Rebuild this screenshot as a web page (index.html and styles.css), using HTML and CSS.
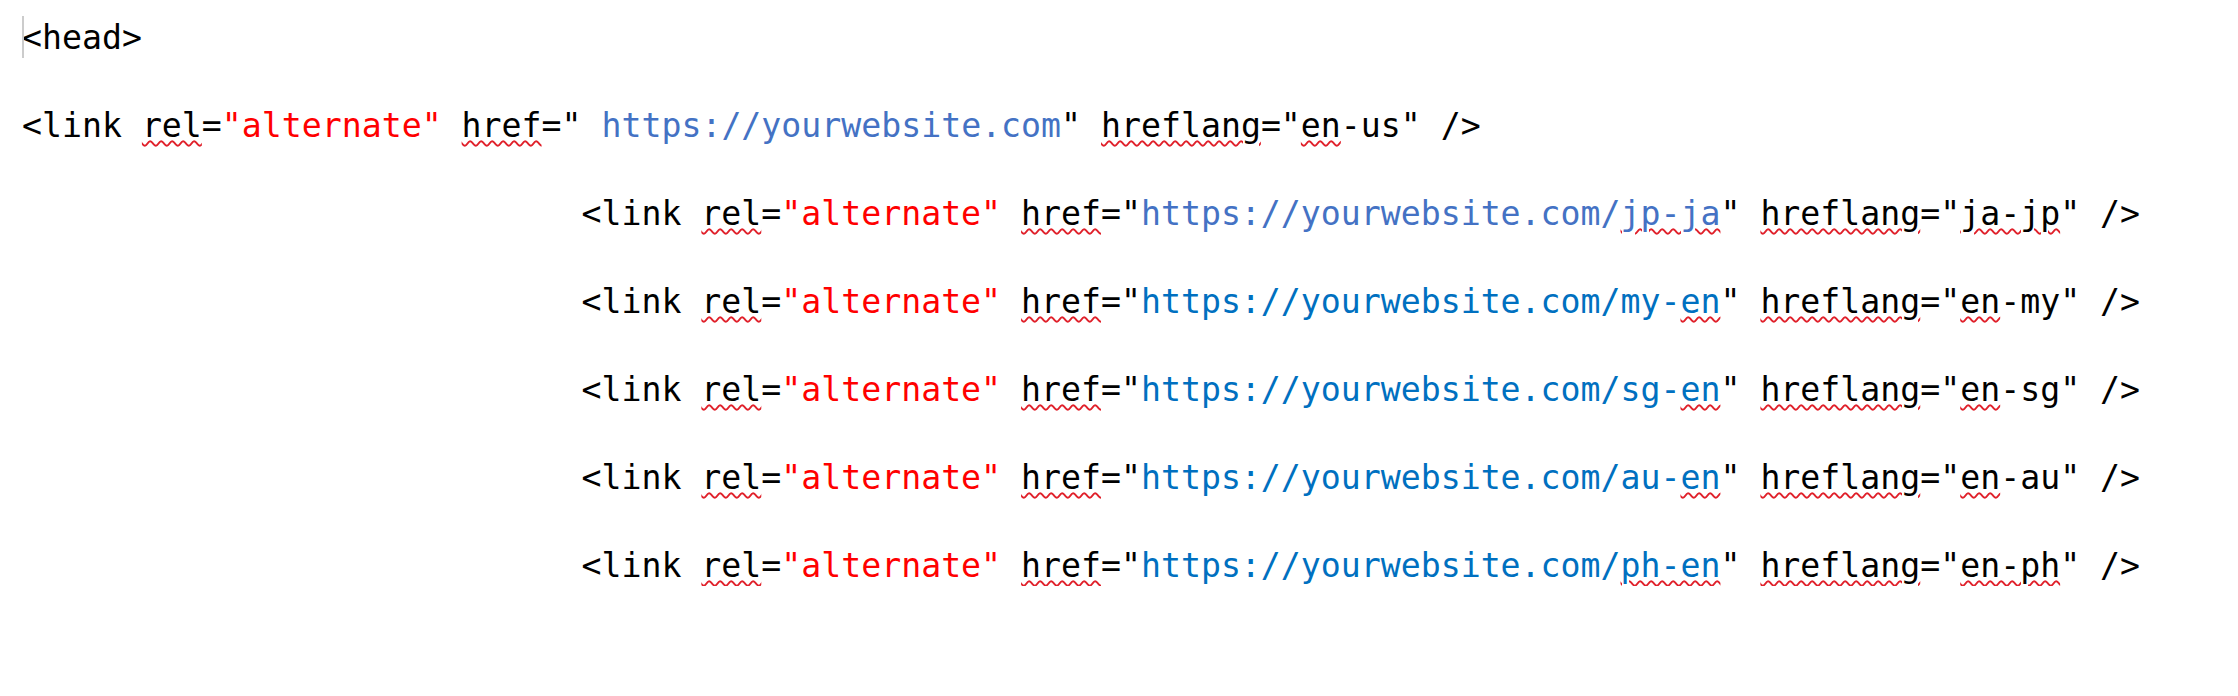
FILE: index.html
```html
<!DOCTYPE html>
<html>
<head>
<meta charset="utf-8">
<link rel="stylesheet" href="styles.css">
</head>
<body>
<div class="doc">
  <p class="line"><span class="caret"></span>&lt;head&gt;</p>
  <p class="line">&lt;link <span class="sq">rel</span>=<span class="str">"alternate"</span> <span class="sq">href</span>=" <span class="url1">https://yourwebsite.com</span>" <span class="sq">hreflang</span>="<span class="sq">en</span>-us" /&gt;</p>
  <p class="line indent">&lt;link <span class="sq">rel</span>=<span class="str">"alternate"</span> <span class="sq">href</span>="<span class="url1">https://yourwebsite.com/<span class="sq">jp-ja</span></span>" <span class="sq">hreflang</span>="<span class="sq">ja-jp</span>" /&gt;</p>
  <p class="line indent">&lt;link <span class="sq">rel</span>=<span class="str">"alternate"</span> <span class="sq">href</span>="<span class="url2">https://yourwebsite.com/my-<span class="sq">en</span></span>" <span class="sq">hreflang</span>="<span class="sq">en</span>-my" /&gt;</p>
  <p class="line indent">&lt;link <span class="sq">rel</span>=<span class="str">"alternate"</span> <span class="sq">href</span>="<span class="url2">https://yourwebsite.com/sg-<span class="sq">en</span></span>" <span class="sq">hreflang</span>="<span class="sq">en</span>-sg" /&gt;</p>
  <p class="line indent">&lt;link <span class="sq">rel</span>=<span class="str">"alternate"</span> <span class="sq">href</span>="<span class="url2">https://yourwebsite.com/au-<span class="sq">en</span></span>" <span class="sq">hreflang</span>="<span class="sq">en</span>-au" /&gt;</p>
  <p class="line indent">&lt;link <span class="sq">rel</span>=<span class="str">"alternate"</span> <span class="sq">href</span>="<span class="url2">https://yourwebsite.com/<span class="sq">ph-en</span></span>" <span class="sq">hreflang</span>="<span class="sq">en-ph</span>" /&gt;</p>
</div>
</body>
</html>
```

FILE: styles.css
```css
html, body {
  margin: 0;
  padding: 0;
  background: #ffffff;
}

.doc {
  display: flex;
  flex-direction: column;
  gap: 48px;
  padding: 18px 0 0 22px;
  font-family: "DejaVu Sans Mono", "Liberation Mono", monospace;
  font-size: 33.2px;
  color: #000000;
}

.line {
  margin: 0;
  line-height: 40px;
  white-space: pre;
  position: relative;
}

.indent {
  margin-left: 28ch;
}

.caret {
  position: absolute;
  left: 0;
  top: -2px;
  width: 2px;
  height: 42px;
  background: #cccccc;
}

.str {
  color: #ff0000;
}

.url1 {
  color: #4472c4;
}

.url2 {
  color: #0070c0;
}

.sq {
  text-decoration-line: underline;
  text-decoration-style: wavy;
  text-decoration-color: #e0202a;
  text-decoration-thickness: 1.5px;
  text-underline-offset: 3px;
}
```
